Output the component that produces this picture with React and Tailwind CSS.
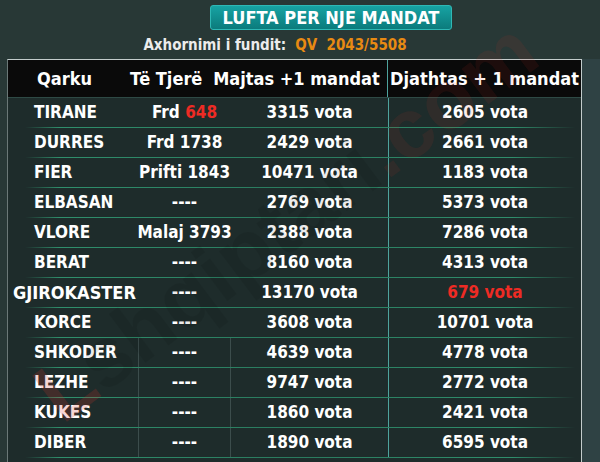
const rows = [
  { q: 'TIRANE', t: <span>Frd <span className="text-[#ee2b24]">648</span></span>, m: '3315 vota', d: '2605 vota' },
  { q: 'DURRES', t: 'Frd 1738', m: '2429 vota', d: '2661 vota' },
  { q: 'FIER', t: 'Prifti 1843', m: '10471 vota', d: '1183 vota' },
  { q: 'ELBASAN', t: '----', m: '2769 vota', d: '5373 vota' },
  { q: 'VLORE', t: 'Malaj 3793', m: '2388 vota', d: '7286 vota' },
  { q: 'BERAT', t: '----', m: '8160 vota', d: '4313 vota' },
  { q: 'GJIROKASTER', t: '----', m: '13170 vota', d: '679 vota', red: true, wide: true },
  { q: 'KORCE', t: '----', m: '3608 vota', d: '10701 vota' },
  { q: 'SHKODER', t: '----', m: '4639 vota', d: '4778 vota', lines: true },
  { q: 'LEZHE', t: '----', m: '9747 vota', d: '2772 vota', lines: true },
  { q: 'KUKES', t: '----', m: '1860 vota', d: '2421 vota', lines: true },
  { q: 'DIBER', t: '----', m: '1890 vota', d: '6595 vota', lines: true },
];

const font = { fontFamily: '"DejaVu Sans Condensed", "DejaVu Sans", sans-serif' };

export default function App() {
  return (
    <div className="w-[600px] h-[462px] overflow-hidden bg-[#283836] text-white font-bold flex flex-col relative" style={font}>
      {/* title */}
      <div className="flex justify-center pt-[5px] pl-[62px]">
        <div className="w-[242px] h-[25px] rounded-[3px] bg-gradient-to-b from-[#17a3a3] to-[#0b7b7c] border border-[#2fb8b5] flex items-center justify-center text-[18px] leading-none">
          LUFTA PER NJE MANDAT
        </div>
      </div>
      <div className="flex justify-center mt-[5px] text-[15px] leading-[20px] pr-[50px]">
        <span className="text-[#ececec]">Axhornimi i fundit:</span>
        <span className="text-[#e88a12] ml-[9px]">QV&nbsp; 2043/5508</span>
      </div>

      <div className="flex flex-1 mt-[4px]">
        <div className="w-[7px] shrink-0" />
        <div className="w-[575px] shrink-0 border-t border-r border-[#c3cccc] border-l-[1px] border-l-[#6b7877] flex flex-col bg-[#1e2c2b]">
          {/* header */}
          <div className="h-[38px] bg-[#0a0a0a] flex items-center text-[18px] border-b border-[#2e4a45]">
            <div className="w-[122px] pl-[29px]">Qarku</div>
            <div className="w-[76px] whitespace-nowrap">Të Tjerë</div>
            <div className="w-[181px] text-center whitespace-nowrap">Majtas +1 mandat</div>
            <div className="flex-1 self-stretch border-l border-[#4ea39d] flex items-center justify-center whitespace-nowrap">Djathtas + 1 mandat</div>
          </div>

          {rows.map((r) => (
            <div key={r.q} className="flex flex-col">
              <div className="h-[29px] flex items-center text-[17px]">
                <div className={`w-[130px] self-stretch flex items-center whitespace-nowrap ${r.wide ? 'pl-[5px] text-[18px]' : 'pl-[26px]'}`}>{r.q}</div>
                <div className={`w-[93px] self-stretch flex items-center justify-center whitespace-nowrap ${r.lines ? 'border-l border-r border-[#3c4d4c]' : 'border-l border-r border-transparent'}`}>{r.t}</div>
                <div className="w-[157px] self-stretch flex items-center justify-center whitespace-nowrap">{r.m}</div>
                <div className={`flex-1 self-stretch border-l border-[#4ea39d] flex items-center justify-center whitespace-nowrap ${r.red ? 'text-[#ee2b24]' : ''}`}>{r.d}</div>
              </div>
              <div className="h-[1px] bg-[linear-gradient(90deg,transparent_3%,#2f8f6c_9%,#2a7a5e_50%,#2f8f6c_88%,transparent_99%)]" />
            </div>
          ))}
        </div>
        <div className="flex-1 bg-[#2f4244]" />
      </div>

      {/* watermark */}
      <div className="absolute left-[45px] top-[360px] -rotate-[37deg] origin-[0%_50%] text-[84px] font-bold whitespace-nowrap pointer-events-none text-black/[0.08] leading-none" style={{ fontFamily: '"Liberation Sans", sans-serif' }}>
        <span className="text-[#d0302a]/20">L</span>shqiptari<span className="text-[#d0302a]/10">.com</span>
      </div>
    </div>
  );
}
